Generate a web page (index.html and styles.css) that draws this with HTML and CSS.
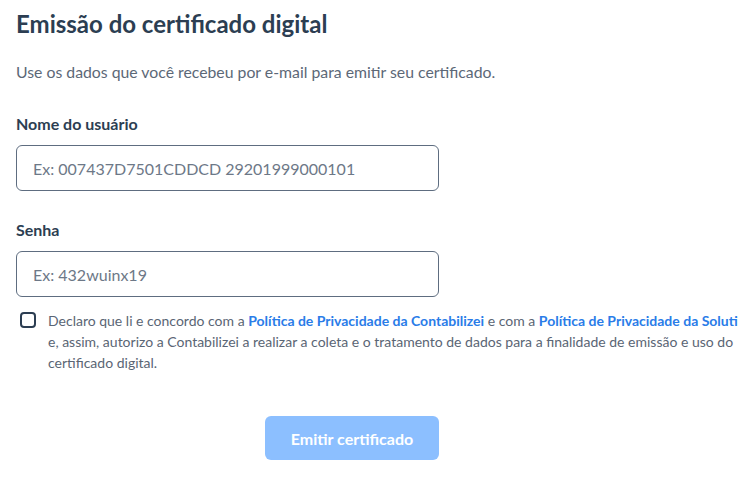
FILE: index.html
```html
<!DOCTYPE html>
<html lang="pt-BR">
<head>
<meta charset="utf-8">
<link rel="stylesheet" href="styles.css">
</head>
<body>
<main class="page">
  <h1 class="title">Emissão do certificado digital</h1>
  <p class="subtitle">Use os dados que você recebeu por e-mail para emitir seu certificado.</p>
  <form class="form">
    <div class="field">
      <label class="label" for="user">Nome do usuário</label>
      <input class="input" id="user" type="text" placeholder="Ex: 007437D7501CDDCD 29201999000101">
    </div>
    <div class="field">
      <label class="label" for="pass">Senha</label>
      <input class="input" id="pass" type="text" placeholder="Ex: 432wuinx19">
    </div>
    <label class="consent">
      <span class="box"></span>
      <span class="consent-text">Declaro que li e concordo com a <a class="link" href="#">Política de Privacidade da Contabilizei</a> e com a <a class="link" href="#">Política de Privacidade da Soluti</a> e, assim, autorizo a Contabilizei a realizar a coleta e o tratamento de dados para a finalidade de emissão e uso do certificado digital.</span>
    </label>
    <div class="actions">
      <button class="btn" type="button">Emitir certificado</button>
    </div>
  </form>
</main>
</body>
</html>
```

FILE: styles.css
```css
* { box-sizing: border-box; }
html, body { margin: 0; padding: 0; background: #fff; }
body {
  font-family: Lato, "Open Sans", sans-serif;
  color: #2d3d4f;
  overflow: hidden;
}
.page {
  padding: 8px 16px 0 16px;
  width: 750px;
}
.title {
  margin: 0;
  font-size: 24px;
  line-height: 32px;
  font-weight: 700;
  color: #2c3e52;
}
.subtitle {
  margin: 20px 0 0 0;
  font-size: 15.8px;
  line-height: 24px;
  color: #5c6877;
}
.form { margin-top: 29px; }
.field {
  display: flex;
  flex-direction: column;
  width: 423px;
  margin-bottom: 28px;
}
.label {
  font-size: 16px;
  line-height: 22px;
  font-weight: 700;
  color: #2c3e52;
  margin-bottom: 10px;
}
.input {
  height: 46px;
  border: 1px solid #5e6d80;
  border-radius: 6px;
  padding: 0 16px;
  font-family: inherit;
  font-size: 16px;
  color: #2c3e52;
  outline: none;
}
.input::placeholder { color: #6d7887; opacity: 1; }
.consent {
  display: flex;
  gap: 12px;
  align-items: flex-start;
  margin-top: -15px;
  width: 730px;
}
.box {
  flex: none;
  width: 16px;
  height: 16px;
  margin: 2px 0 0 4px;
  border: 2px solid #2c3e52;
  border-radius: 4px;
}
.consent-text {
  font-size: 14px;
  line-height: 21px;
  color: #5a6574;
}
.link {
  color: #2a7ce8;
  font-weight: 700;
  text-decoration: none;
}
.actions {
  width: 423px;
  display: flex;
  justify-content: flex-end;
  margin-top: 43px;
}
.btn {
  width: 174px;
  height: 44px;
  border: none;
  border-radius: 6px;
  background: #8cbfff;
  color: #fff;
  font-family: inherit;
  font-size: 16px;
  font-weight: 700;
}
```
